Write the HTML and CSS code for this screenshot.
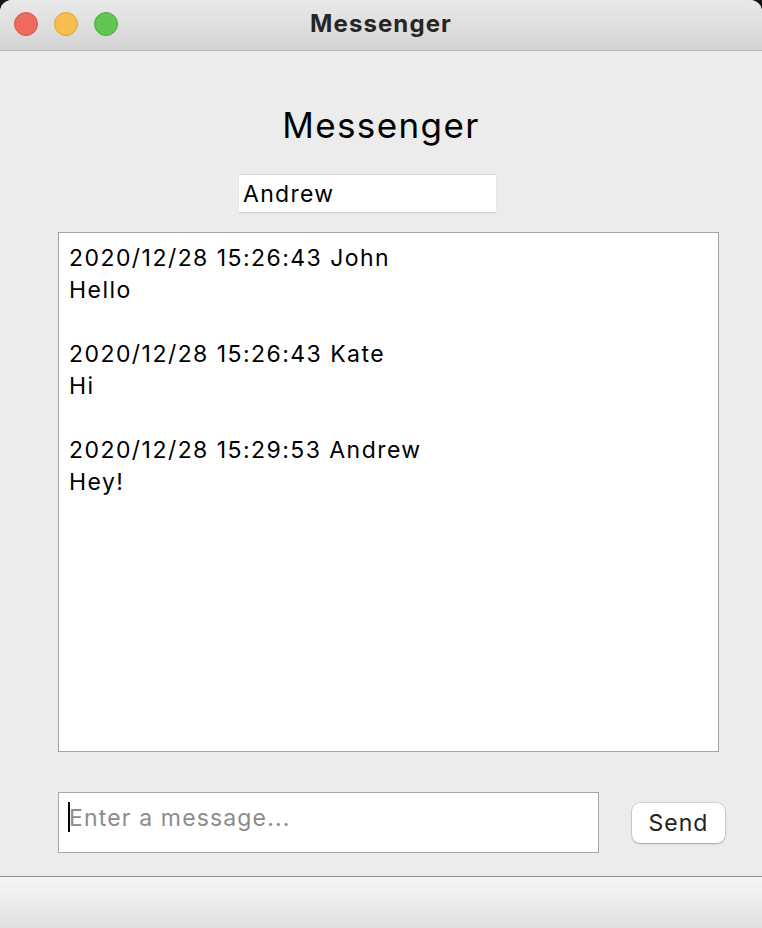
FILE: index.html
```html
<!DOCTYPE html>
<html lang="en">
<head>
<meta charset="utf-8">
<title>Messenger</title>
<link rel="stylesheet" href="styles.css">
</head>
<body>
<div class="window">
  <header class="titlebar">
    <div class="lights">
      <span class="light red"></span>
      <span class="light yellow"></span>
      <span class="light green"></span>
    </div>
    <div class="wtitle">Messenger</div>
  </header>
  <main class="content">
    <h1 class="heading">Messenger</h1>
    <div class="name-field">Andrew</div>
    <div class="chat">
      <div class="msg"><div>2020/12/28 15:26:43 John</div><div>Hello</div></div>
      <div class="msg"><div>2020/12/28 15:26:43 Kate</div><div>Hi</div></div>
      <div class="msg"><div>2020/12/28 15:29:53 Andrew</div><div>Hey!</div></div>
    </div>
    <div class="compose">
      <div class="entry"><span class="caret"></span><span class="placeholder">Enter a message...</span></div>
      <button class="send">Send</button>
    </div>
  </main>
  <footer class="statusbar"></footer>
</div>
</body>
</html>
```
FILE: styles.css
```css
html, body {
  margin: 0;
  padding: 0;
  background: #161616;
  height: 100%;
}
body {
  font-family: Inter, "Liberation Sans", sans-serif;
}
.window {
  height: 928px;
  display: flex;
  flex-direction: column;
  border-radius: 12px 12px 0 0;
  overflow: hidden;
  background: #ececec;
}
.titlebar {
  height: 50px;
  flex: 0 0 auto;
  border-bottom: 1px solid #b4b4b4;
  background: linear-gradient(#e9e9e9, #d4d4d4);
  display: flex;
  align-items: center;
  position: relative;
}
.lights {
  display: flex;
  gap: 16px;
  padding-left: 14px;
  margin-top: -3px;
}
.light {
  width: 22px;
  height: 22px;
  border-radius: 50%;
  border: 1px solid;
}
.red { background: #ee6a5f; border-color: #d5564b; }
.yellow { background: #f6be4f; border-color: #dba33c; }
.green { background: #62c554; border-color: #4eaa3f; }
.wtitle {
  position: absolute;
  left: 0;
  right: 0;
  top: 0;
  text-align: center;
  line-height: 47px;
  font-size: 24px;
  font-weight: 700;
  color: #262626;
  letter-spacing: 1.1px;
}
.content {
  flex: 1 1 auto;
  display: flex;
  flex-direction: column;
  align-items: flex-start;
}
.heading {
  margin: 54px 0 0;
  align-self: center;
  font-size: 35px;
  line-height: 40px;
  font-weight: 400;
  color: #000;
  letter-spacing: 1.4px;
}
.name-field {
  margin: 29px 0 0 239px;
  width: 253px;
  height: 37px;
  background: #fff;
  border-top: 1px solid #d6d6d6;
  box-shadow: 0 1px 1px rgba(0,0,0,0.12);
  padding-left: 4px;
  font-size: 23px;
  line-height: 38px;
  color: #000;
  letter-spacing: 1.3px;
}
.chat {
  margin: 20px 0 0 58px;
  width: 639px;
  height: 500px;
  background: #fff;
  border: 1px solid #a3a3a3;
  padding: 9px 10px;
  font-size: 23px;
  line-height: 32px;
  color: #000;
  letter-spacing: 1.45px;
}
.msg {
  margin-bottom: 32px;
}
.compose {
  margin: 40px 0 0 58px;
  display: flex;
  align-items: center;
  gap: 33px;
}
.entry {
  width: 530px;
  height: 59px;
  background: #fff;
  border: 1px solid #a8a8a8;
  padding: 0 0 0 9px;
  display: flex;
  align-items: flex-start;
  font-size: 23px;
  line-height: 50px;
  letter-spacing: 1.15px;
}
.caret {
  display: inline-block;
  width: 2px;
  height: 30px;
  background: #000;
  margin-top: 9px;
  margin-right: -1px;
}
.placeholder {
  color: #8c8c8c;
}
.send {
  width: 93px;
  height: 40px;
  background: #fff;
  border: none;
  border-radius: 8px;
  box-shadow: 0 0 0 0.5px rgba(0,0,0,0.2), 0 1px 2px rgba(0,0,0,0.22);
  font-family: Inter, "Liberation Sans", sans-serif;
  font-size: 23px;
  color: #222;
  padding: 0;
  letter-spacing: 1px;
}
.statusbar {
  height: 51px;
  flex: 0 0 auto;
  border-top: 1px solid #8e8e8e;
  background: linear-gradient(#f6f6f6, #e0e0e0);
}
```
